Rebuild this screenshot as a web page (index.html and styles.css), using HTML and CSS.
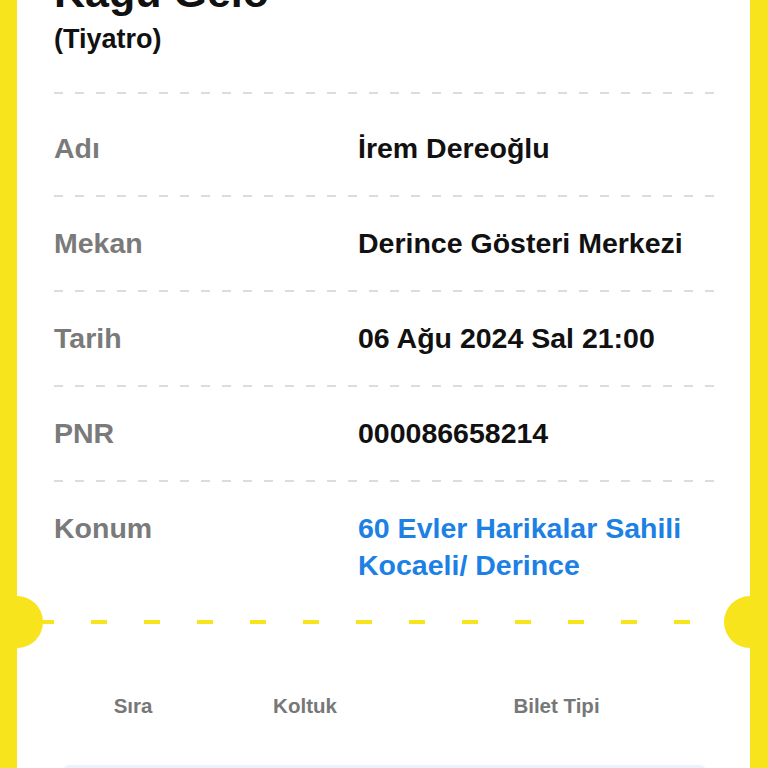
FILE: index.html
```html
<!DOCTYPE html>
<html lang="tr">
<head>
<meta charset="utf-8">
<title>Bilet</title>
<link rel="stylesheet" href="styles.css">
</head>
<body>
<div class="ticket">
  <div class="head">
    <h1 class="title">Kağu Gelo</h1>
    <div class="subtitle">(Tiyatro)</div>
  </div>
  <div class="info">
    <div class="sep"></div>
    <div class="row row-first">
      <div class="label">Adı</div>
      <div class="value">İrem Dereoğlu</div>
    </div>
    <div class="sep"></div>
    <div class="row">
      <div class="label">Mekan</div>
      <div class="value">Derince Gösteri Merkezi</div>
    </div>
    <div class="sep"></div>
    <div class="row">
      <div class="label">Tarih</div>
      <div class="value">06 Ağu 2024 Sal 21:00</div>
    </div>
    <div class="sep"></div>
    <div class="row">
      <div class="label">PNR</div>
      <div class="value">000086658214</div>
    </div>
    <div class="sep"></div>
    <div class="row row-last">
      <div class="label">Konum</div>
      <div class="value link">60 Evler Harikalar Sahili<br>Kocaeli/ Derince</div>
    </div>
  </div>
  <div class="tear">
    <span class="notch notch-left"></span>
    <span class="notch notch-right"></span>
  </div>
  <div class="seats">
    <div class="seat-head">
      <div class="col">Sıra</div>
      <div class="col">Koltuk</div>
      <div class="col">Bilet Tipi</div>
    </div>
    <div class="seat-box"></div>
  </div>
</div>
</body>
</html>
```

FILE: styles.css
```css
html, body {
  margin: 0;
  padding: 0;
}
body {
  background: #f8e41c;
  height: 768px;
  overflow: hidden;
  font-family: "Liberation Sans", Arial, sans-serif;
}
.ticket {
  margin: 0 18px 0 17px;
  background: #ffffff;
  height: 800px;
  position: relative;
}
.head {
  padding: 0 36px 0 37px;
  margin-top: -30px;
}
.title {
  margin: 0;
  font-size: 43px;
  line-height: 44px;
  font-weight: 700;
  color: #111;
}
.subtitle {
  margin-top: 9px;
  font-size: 27px;
  line-height: 32px;
  font-weight: 700;
  color: #111;
}
.info {
  padding: 37px 36px 0 37px;
}
.sep {
  height: 2px;
  background: repeating-linear-gradient(to right, #dcdcdc 0 9px, transparent 9px 21px);
}
.row {
  display: grid;
  grid-template-columns: 304px 1fr;
  padding: 28px 0;
  font-size: 28.5px;
  line-height: 37px;
  font-weight: 700;
}
.row-first {
  padding-top: 36px;
}
.row-last {
  padding-bottom: 36px;
}
.label {
  color: #7a7a7a;
}
.value {
  color: #111;
}
.link {
  color: #1c80e4;
}
.tear {
  position: relative;
  height: 4px;
  background: repeating-linear-gradient(to right, transparent 0 21px, #f8e41c 21px 37px, transparent 37px 53px);
}
.notch {
  position: absolute;
  top: -24px;
  width: 52px;
  height: 52px;
  border-radius: 50%;
  background: #f8e41c;
}
.notch-left {
  left: -26px;
}
.notch-right {
  right: -26px;
}
.seats {
  padding: 70px 43px 0 45px;
}
.seat-head {
  display: grid;
  grid-template-columns: 142px 202px 301px;
  font-size: 20.5px;
  line-height: 24px;
  font-weight: 700;
  color: #777;
  text-align: center;
}
.seat-box {
  margin-top: 47px;
  height: 60px;
  background: #ebf2fd;
  border-radius: 8px 8px 0 0;
}
```
